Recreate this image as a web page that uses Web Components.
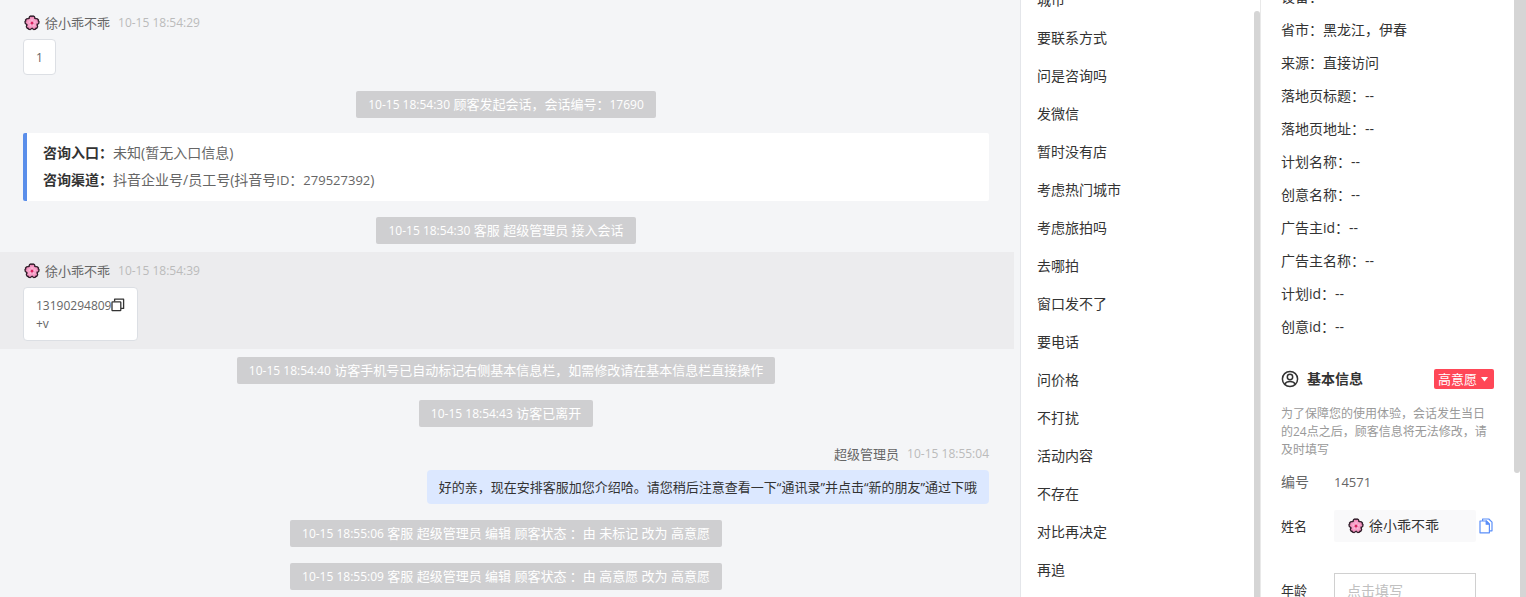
<!DOCTYPE html>
<html lang="zh-CN">
<head>
<meta charset="utf-8">
<title>客服会话</title>
<style>
html, body { height: 100%; }
body { margin: 0; overflow: hidden; font: 13px/18px "Open Sans", "Noto Sans CJK SC", sans-serif; color: #333; background: #f4f5f7; }
small { font-size: 12px; line-height: 1; }
</style>
</head>
<body>
<chat-workspace>
  <chat-thread slot="thread">
    <chat-message name="徐小乖不乖" time="10-15 18:54:29" flower><small>1</small></chat-message>
    <system-note time="10-15 18:54:30">顾客发起会话，会话编号：<small>17690</small></system-note>
    <entry-card></entry-card>
    <system-note time="10-15 18:54:30">客服 超级管理员 接入会话</system-note>
    <chat-message name="徐小乖不乖" time="10-15 18:54:39" flower active><small>13190294809</small><copy-button></copy-button><br><small>+v</small></chat-message>
    <system-note time="10-15 18:54:40">访客手机号已自动标记右侧基本信息栏，如需修改请在基本信息栏直接操作</system-note>
    <system-note time="10-15 18:54:43">访客已离开</system-note>
    <chat-message name="超级管理员" time="10-15 18:55:04" own>好的亲，现在安排客服加您介绍哈。请您稍后注意查看一下“通讯录”并点击“新的朋友”通过下哦</chat-message>
    <system-note time="10-15 18:55:06">客服 超级管理员 编辑 顾客状态 ：由 未标记 改为 高意愿</system-note>
    <system-note time="10-15 18:55:09">客服 超级管理员 编辑 顾客状态 ：由 高意愿 改为 高意愿</system-note>
  </chat-thread>
  <quick-replies slot="replies"></quick-replies>
  <visitor-panel slot="visitor"></visitor-panel>
</chat-workspace>

<script>
const define = (name, html, setup) => customElements.define(name, class extends HTMLElement {
  connectedCallback() {
    if (this.shadowRoot) return;
    const root = this.attachShadow({ mode: 'open' });
    const template = document.createElement('template');
    template.innerHTML = html;
    root.append(template.content.cloneNode(true));
    if (setup) setup(root, this);
  }
});

define('chat-workspace', `
<style>
:host { display: grid; grid-template-columns: minmax(0, 1fr) 240px 266px; height: 100vh; overflow: hidden; }
::slotted(*) { min-height: 0; overflow: hidden; }
</style>
<slot name="thread"></slot><slot name="replies"></slot><slot name="visitor"></slot>`);

define('chat-thread', `
<style>
:host { display: block; background: #f4f5f7; padding: 4px 6px 0 0; }
main { display: flex; flex-direction: column; }
</style>
<main><slot></slot></main>`);

define('flower-icon', `
<style>:host { display: inline-flex; flex: none; } svg { display: block; }</style>
<svg width="16" height="16" viewBox="0 0 16 16" aria-hidden="true">
  <g stroke="#2f1c28" stroke-width="1.3" stroke-linejoin="round" fill="#f48fbd">
    <path id="p" d="M8 8C5 5.800 4.600 3.200 5.600 1.700L7.200 .9L8 1.500L8.800 .9L10.400 1.700C11.400 3.200 11 5.800 8 8Z"/>
    <use href="#p" transform="rotate(72 8 8)"/><use href="#p" transform="rotate(144 8 8)"/><use href="#p" transform="rotate(216 8 8)"/><use href="#p" transform="rotate(288 8 8)"/>
  </g>
  <circle cx="8" cy="8" r="4.800" fill="#f6a0c8"/>
  <path d="M8 4.500V8L11.300 6.900M8 8L10.100 10.900M8 8L5.900 10.900M8 8L4.700 6.900" stroke="#ffc7df" stroke-width="1" fill="none"/>
  <circle cx="8" cy="8" r="1.500" fill="#d9205f"/>
</svg>`);

define('copy-button', `
<style>
:host { display: inline-block; vertical-align: -2px; height: 14px; }
button { display: block; margin: 0; padding: 0; border: 0; background: none; color: #333; cursor: pointer; }
svg { display: block; }
</style>
<button type="button" aria-label="复制号码"><svg width="14" height="14" viewBox="0 0 14 14" fill="none" stroke="currentColor" stroke-width="1.300" stroke-linejoin="round"><rect x="1" y="3.800" width="8.800" height="8.800" rx=".6"/><path d="M3.600 3.600V1.200H12.600V10.400H10"/></svg></button>`);

define('chat-message', `
<style>
:host { display: block; padding: 8px 25px 8px 23px; }
:host([active]) { background: #ececee; }
article { display: flex; flex-direction: column; align-items: flex-start; gap: 5px; }
header { display: flex; align-items: center; height: 22px; }
flower-icon { margin: 0 5px 0 1px; }
.name { color: #666; }
time { margin-left: 8px; font-size: 12px; color: #bbb; }
.bubble { padding: 8px 12px; border: 1px solid #dcdfe4; border-radius: 4px; background: #fff; color: #666; }
:host([own]) article { align-items: flex-end; }
:host([own]) .bubble { border: 0; background: #dce8ff; color: #333; }
</style>
<article>
  <header><span class="name"></span><time></time></header>
  <div class="bubble"><slot></slot></div>
</article>`, (root, host) => {
  root.querySelector('.name').textContent = host.getAttribute('name');
  root.querySelector('time').textContent = host.getAttribute('time');
  if (host.hasAttribute('flower')) root.querySelector('header').prepend(document.createElement('flower-icon'));
});

define('system-note', `
<style>
:host { display: flex; justify-content: center; padding: 8px 25px 8px 23px; }
p { margin: 0; padding: 0 12px; line-height: 27px; border-radius: 2px; background: #cfcfd1; color: #fff; }
time { font-size: 12px; line-height: 1; }
</style>
<p><time></time> <slot></slot></p>`, (root, host) => {
  root.querySelector('time').textContent = host.getAttribute('time');
});

define('entry-card', `
<style>
:host { display: block; margin: 7px 25px 8px 23px; }
dl { margin: 0; padding: 6px 16px 8px; border-left: 4px solid #5a8eea; border-radius: 2px; background: #fff; font-size: 14px; line-height: 27px; }
div { display: flex; }
dt { font-weight: 700; color: #333; }
dd { margin: 0; color: #666; }
small { font-size: 13px; line-height: 1; }
</style>
<dl>
  <div><dt>咨询入口：</dt><dd>未知(暂无入口信息)</dd></div>
  <div><dt>咨询渠道：</dt><dd>抖音企业号/员工号(抖音号<small>ID</small>：<small>279527392</small>)</dd></div>
</dl>`);

define('quick-replies', `
<style>
:host { display: flex; background: #fff; border-left: 1px solid #e4e6ea; }
ul { flex: 1; margin: -19px 0 0; padding: 0 16px; list-style: none; font-size: 14px; line-height: 38px; }
.bar { width: 6px; margin-top: 11px; border-radius: 3px 3px 0 0; background: #d5d5d5; }
</style>
<ul></ul><div class="bar"></div>`, root => {
  const replies = ['城市', '要联系方式', '问是咨询吗', '发微信', '暂时没有店', '考虑热门城市', '考虑旅拍吗', '去哪拍', '窗口发不了', '要电话', '问价格', '不打扰', '活动内容', '不存在', '对比再决定', '再追'];
  root.querySelector('ul').append(...replies.map(text => {
    const item = document.createElement('li');
    item.textContent = text;
    return item;
  }));
});

define('visitor-panel', `
<style>
:host { display: flex; background: #fff; border-left: 1px solid #e9e9e9; }
.content { flex: 1; min-width: 0; padding: 0 20px; margin-top: -20px; }
.facts { margin: 0; padding: 0; list-style: none; font-size: 14px; line-height: 33px; }
.track { width: 6px; }
.thumb { height: 473px; border-radius: 0 0 3px 3px; background: #d5d5d5; }
.edge { width: 6px; background: #d5d5d5; }
.heading { display: flex; align-items: center; height: 22px; margin-top: 25px; }
h2 { flex: 1; margin: 0 0 0 8px; font-size: 14px; line-height: 22px; font-weight: 700; }
.heading svg { flex: none; }
.tag { display: flex; align-items: center; gap: 4px; height: 20px; margin: 0; padding: 0 6px 0 4px; border: 0; border-radius: 2px; background: #ff4757; color: #fff; font: inherit; }
.note { margin: 15px 0 13px; font-size: 12px; line-height: 18px; color: #999; }
.field { display: flex; align-items: center; height: 32px; margin-bottom: 32px; }
.field label { width: 53px; }
.number { height: 20px; margin-bottom: 18px; color: #666; }
.number label { font-size: 14px; }
output { font-size: 13px; }
.value { display: flex; align-items: center; width: 142px; height: 32px; box-sizing: border-box; padding: 0 14px; gap: 5px; background: #f9f9fa; border-radius: 2px; font-size: 14px; }
.copy { margin: 0 0 0 3px; padding: 0; border: 0; background: none; color: #5b8ff9; }
svg { display: block; }
input { width: 142px; height: 34px; box-sizing: border-box; padding: 0 12px; border: 1px solid #d0d0d0; border-radius: 0; background: #fff; font: inherit; font-size: 14px; }
input::placeholder { color: #c0c0c0; }
</style>
<div class="content">
  <ul class="facts">
    <li>设备：</li><li>省市：黑龙江，伊春</li><li>来源：直接访问</li><li>落地页标题：--</li><li>落地页地址：--</li><li>计划名称：--</li><li>创意名称：--</li><li>广告主id：--</li><li>广告主名称：--</li><li>计划id：--</li><li>创意id：--</li>
  </ul>
  <div class="heading">
    <svg width="18" height="18" viewBox="0 0 18 18" fill="none" stroke="#333" stroke-width="1.500" aria-hidden="true"><circle cx="9" cy="9" r="7.600"/><circle cx="9" cy="7" r="2.700"/><path d="M3.700 14.200C5 11.900 7 11.600 9 11.600S13 11.900 14.300 14.200"/></svg>
    <h2>基本信息</h2>
    <button class="tag" type="button" aria-haspopup="listbox">高意愿<svg width="7" height="5" viewBox="0 0 7 5" aria-hidden="true"><path d="M0 0H7L3.500 4.500Z" fill="#fff"/></svg></button>
  </div>
  <p class="note">为了保障您的使用体验，会话发生当日的24点之后，顾客信息将无法修改，请及时填写</p>
  <div class="field number"><label for="number">编号</label><output id="number">14571</output></div>
  <div class="field"><label for="name">姓名</label><output id="name" class="value"><flower-icon></flower-icon>徐小乖不乖</output>
    <button class="copy" type="button" aria-label="复制姓名"><svg width="14" height="16" viewBox="0 0 14 16" fill="none" stroke="currentColor" stroke-width="1.200" stroke-linejoin="round"><path d="M3.600 3V1H9.800L13 4.200V12.800H10.600"/><path d="M1 3H7.200L10.400 6.200V14.800H1Z"/><path d="M7.200 3V6.200H10.400Z" fill="currentColor"/></svg></button></div>
  <div class="field"><label for="age">年龄</label><input id="age" type="text" placeholder="点击填写"></div>
</div>
<div class="track"><div class="thumb"></div></div>
<div class="edge"></div>`);
</script>
</body>
</html>
